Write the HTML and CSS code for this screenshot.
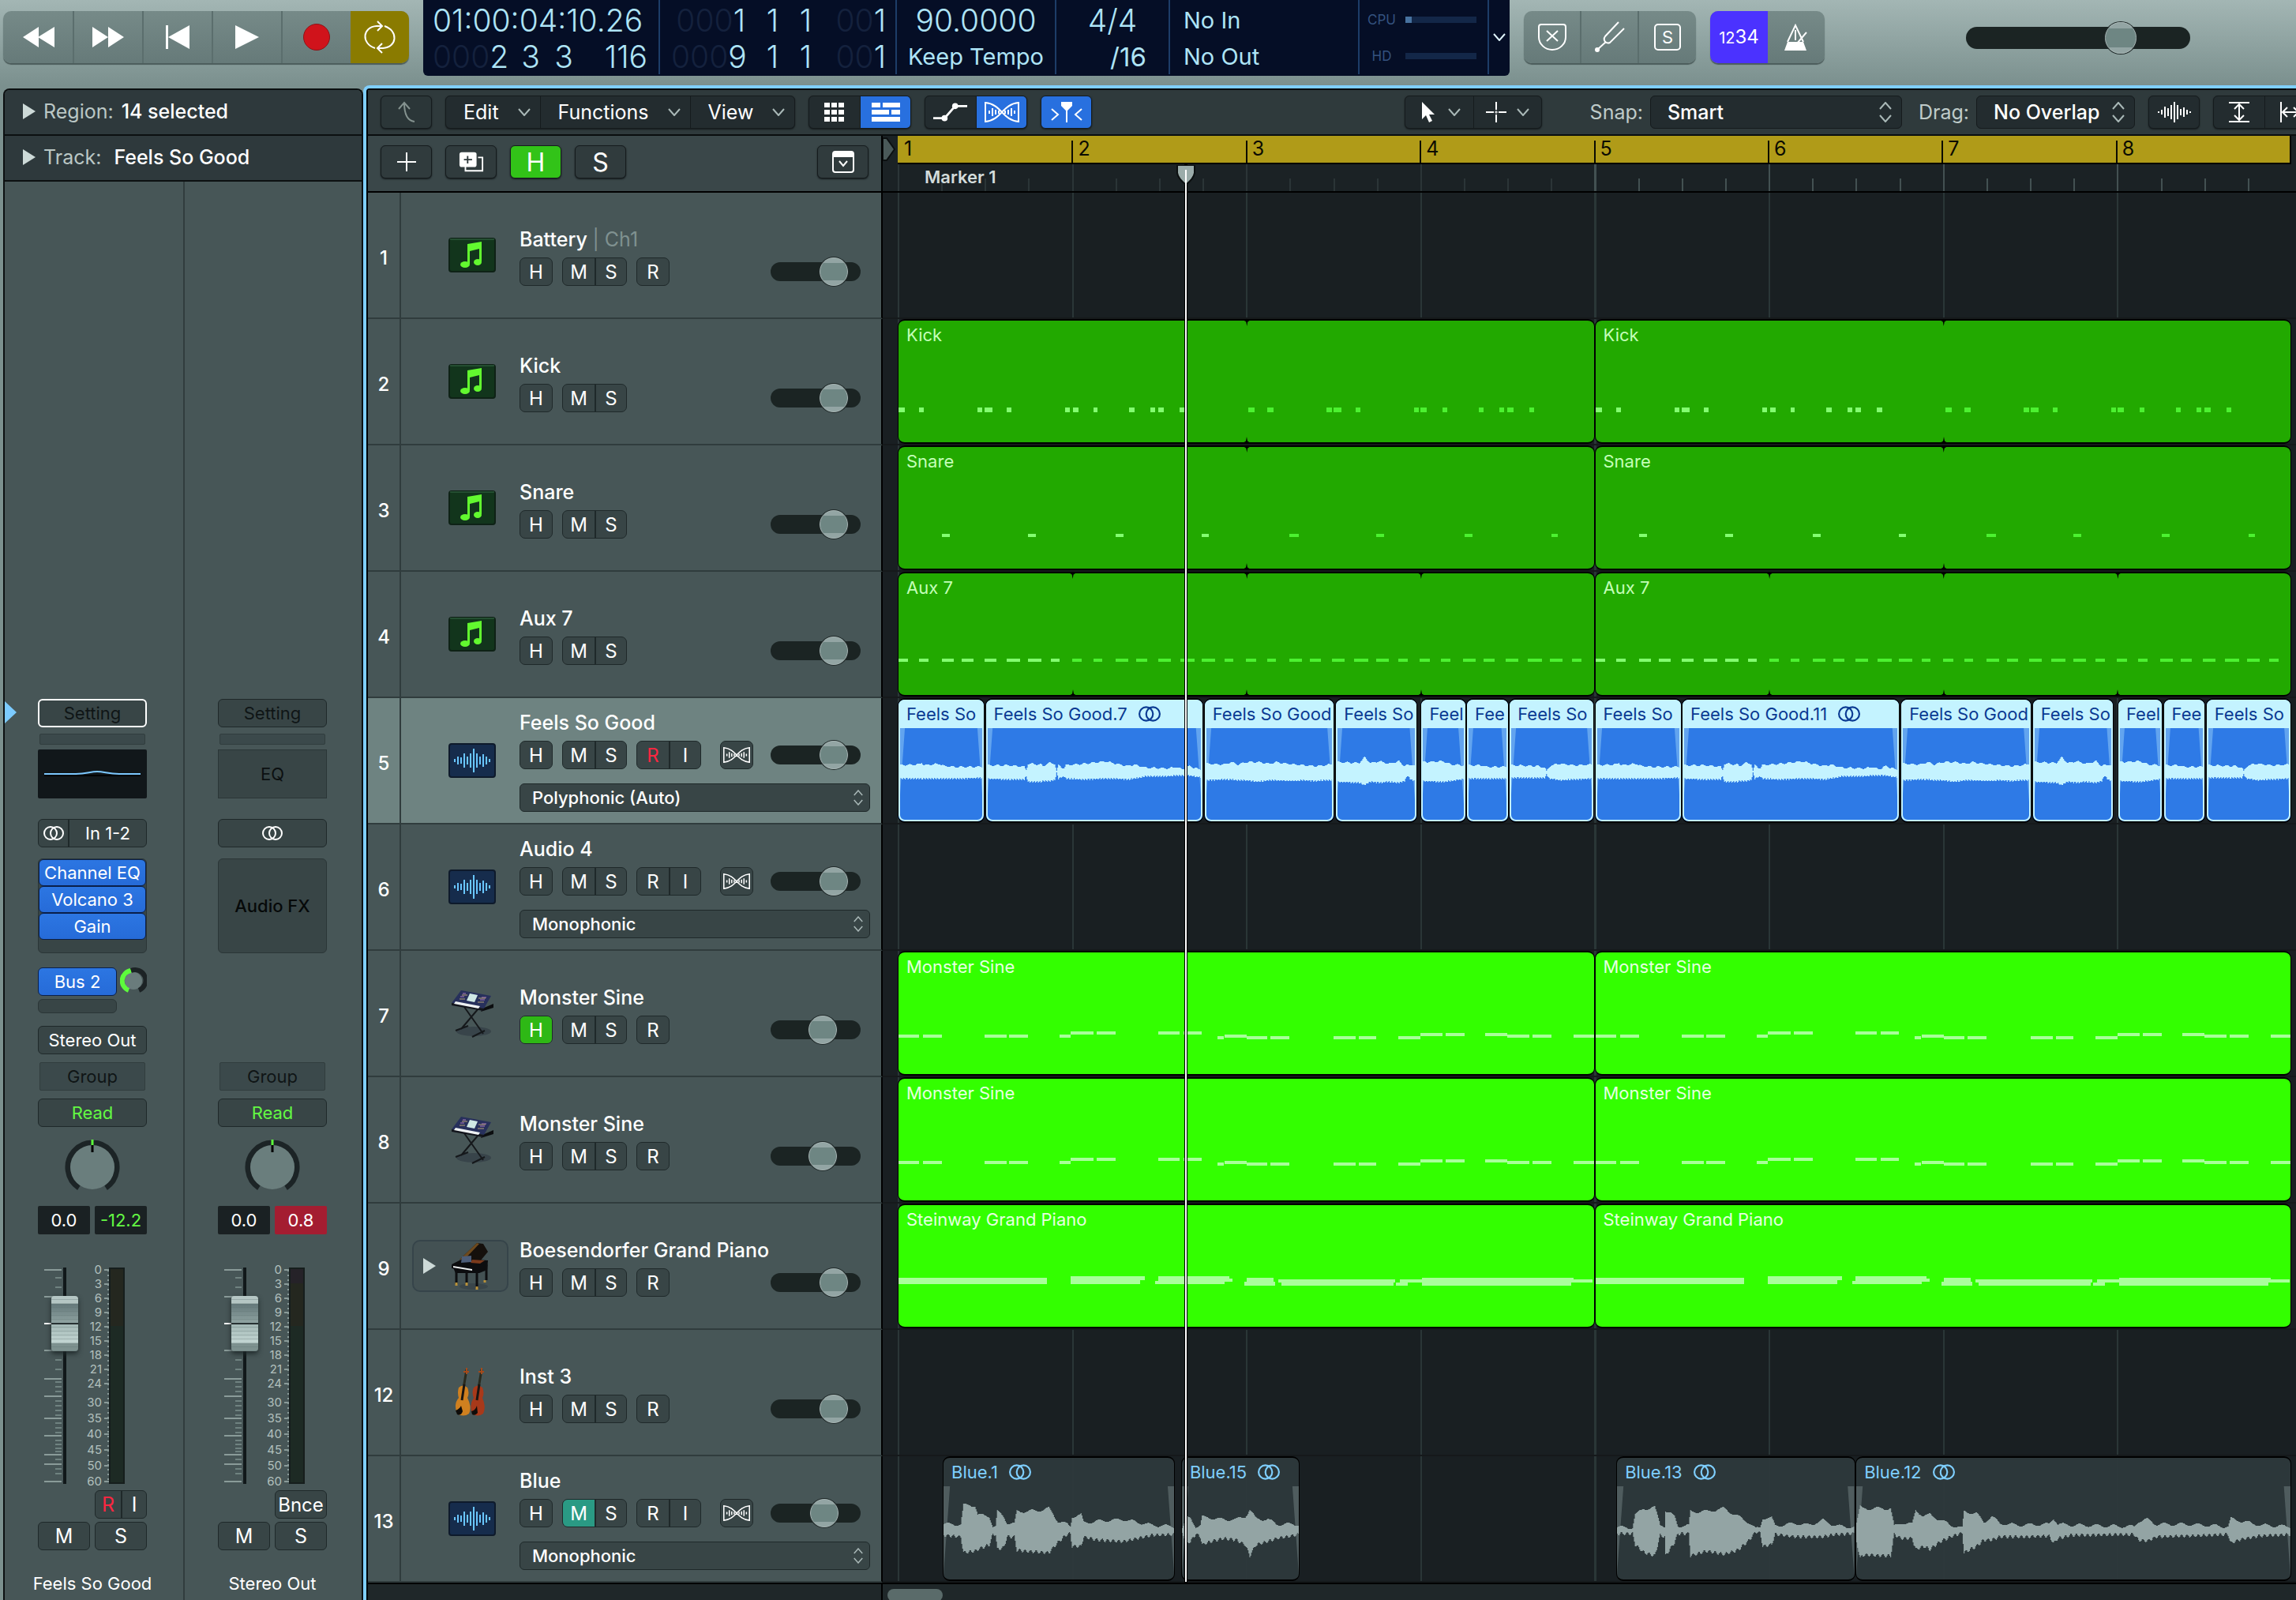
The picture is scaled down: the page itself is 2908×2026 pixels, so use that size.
FILE: index.html
```html
<!DOCTYPE html>
<html lang="en">
<head>
    <meta charset="UTF-8">
    <meta name="viewport" content="width=device-width, initial-scale=1.0">
    <title>Tracks</title>
    <link rel="stylesheet" href="styles.css">
</head>
<body>

    <!-- Icon library -->
    <svg class="icon-defs" aria-hidden="true">
        <symbol id="i-rewind" viewBox="0 0 42 28"><path d="M21 1v26L1 14zM41 1v26L20 14z" fill="currentColor"/></symbol>
        <symbol id="i-forward" viewBox="0 0 42 28"><path d="M1 1v26l20-13zM21 1v26l20-13z" fill="currentColor"/></symbol>
        <symbol id="i-start" viewBox="0 0 32 32"><path d="M1 1h3v30H1zM31 1v30L4 16z" fill="currentColor"/></symbol>
        <symbol id="i-play" viewBox="0 0 32 32"><path d="M1 1v30l30-15z" fill="currentColor"/></symbol>
        <symbol id="i-cycle" viewBox="0 0 44 44"><g fill="none" stroke="currentColor" stroke-width="2"><path d="M16 36C-2 30 0 9 18 8h7M28 8c18 6 16 27-2 28h-7"/><path d="M19 2l6 6-6 6M25 30l-6 6 6 6"/></g></symbol>
        <symbol id="i-shield" viewBox="0 0 36 36"><g fill="none" stroke="currentColor" stroke-width="2"><path d="M4 2h28q3 0 3 3v13c0 9-8 16-17 16S1 27 1 18V5q0-3 3-3z"/><path d="M11 10l14 13M25 10L11 23"/></g></symbol>
        <symbol id="i-fork" viewBox="0 0 40 40"><g fill="none" stroke="currentColor" stroke-width="2"><path d="M31 1L14 19c-3 4 0 10 6 8L38 9"/><path d="M15 26L4 36"/></g><circle cx="4" cy="36" r="3" fill="currentColor"/></symbol>
        <symbol id="i-metro" viewBox="0 0 34 36"><path d="M2 35l4-11h20l4 11z" fill="currentColor"/><path d="M6 24L16 3l10 21M16 9v13M18 26L30 12" fill="none" stroke="currentColor" stroke-width="2"/></symbol>
        <symbol id="i-up" viewBox="0 0 24 28"><path d="M22 26C13 25 9 17 9 2M2 10l7-8 7 8" fill="none" stroke="currentColor" stroke-width="2"/></symbol>
        <symbol id="i-plus" viewBox="0 0 24 24"><path d="M12 0v24M0 12h24" stroke="currentColor" stroke-width="2"/></symbol>
        <symbol id="i-dup" viewBox="0 0 34 28"><path d="M9 20v6h23V8h-6" fill="none" stroke="currentColor" stroke-width="2"/><rect x="1" y="1" width="23" height="20" rx="3" fill="currentColor"/><path d="M12 6v10M7 11h11" stroke="#2f3a3c" stroke-width="2"/></symbol>
        <symbol id="i-drop" viewBox="0 0 28 28"><rect x="1" y="1" width="26" height="26" rx="3" fill="none" stroke="currentColor" stroke-width="2"/><path d="M2 2h24v6H2z" fill="currentColor"/><path d="M9 13l5 6 5-6" fill="none" stroke="currentColor" stroke-width="2"/></symbol>
        <symbol id="i-grid" viewBox="0 0 26 26"><path d="M0 1h7v6H0zM9 1h7v6H9zM18 1h7v6h-7zM0 10h7v6H0zM9 10h7v6H9zM18 10h7v6h-7zM0 19h7v6H0zM9 19h7v6H9zM18 19h7v6h-7z" fill="currentColor"/></symbol>
        <symbol id="i-list" viewBox="0 0 36 26"><path d="M0 1h11v6H0zM14 1h22v6H14zM0 10h22v6H0zM25 10h11v6H25zM0 19h36v6H0z" fill="currentColor"/></symbol>
        <symbol id="i-auto" viewBox="0 0 46 26"><path d="M0 21h15L29 5h16" fill="none" stroke="currentColor" stroke-width="3"/><circle cx="15" cy="21" r="4" fill="currentColor"/><circle cx="29" cy="5" r="4" fill="currentColor"/></symbol>
        <symbol id="i-flex" viewBox="0 0 44 28"><path d="M1 2v24C22 24 22 4 43 2v24C22 24 22 4 1 2z" fill="none" stroke="currentColor" stroke-width="2"/><path d="M6 12v4M10 9v10M14 11v6M18 12v4M38 12v4M34 9v10M30 11v6M26 12v4" stroke="currentColor" stroke-width="2"/></symbol>
        <symbol id="i-catch" viewBox="0 0 40 28"><path d="M13 1h14v5l-6 6v15h-2V12l-6-6z" fill="currentColor"/><path d="M1 10l8 7-8 7M39 10l-8 7 8 7" fill="none" stroke="currentColor" stroke-width="2"/></symbol>
        <symbol id="i-pointer" viewBox="0 0 18 26"><path d="M1 0v22l5-5 4 9 4-2-4-8h7z" fill="currentColor"/></symbol>
        <symbol id="i-cross" viewBox="0 0 28 28"><path d="M14 1v10M14 17v10M1 14h10M17 14h10" stroke="currentColor" stroke-width="2"/><path d="M12 14h4M14 12v4" stroke="currentColor"/></symbol>
        <symbol id="i-chev" viewBox="0 0 16 10"><path d="M1 1l7 8 7-8" fill="none" stroke="currentColor" stroke-width="2"/></symbol>
        <symbol id="i-updown" viewBox="0 0 16 26"><path d="M1 9l7-8 7 8M1 17l7 8 7-8" fill="none" stroke="currentColor" stroke-width="2"/></symbol>
        <symbol id="i-wave" viewBox="0 0 44 28"><path d="M2 13v2M6 11v6M10 7v14M14 9v10M18 5v18M22 1v26M26 5v18M30 10v8M34 8v12M38 11v6M42 13v2" stroke="currentColor" stroke-width="2"/></symbol>
        <symbol id="i-vzoom" viewBox="0 0 28 28"><path d="M1 2h26M1 26h26M14 5v18M8 10l6-6 6 6M8 18l6 6 6-6" fill="none" stroke="currentColor" stroke-width="2"/></symbol>
        <symbol id="i-hzoom" viewBox="0 0 28 28"><path d="M2 1v26M26 1v26M5 14h18M10 8l-6 6 6 6M18 8l6 6-6 6" fill="none" stroke="currentColor" stroke-width="2"/></symbol>
        <symbol id="i-stereo" viewBox="0 0 26 18"><g fill="none" stroke="currentColor" stroke-width="2"><circle cx="9" cy="9" r="8"/><circle cx="17" cy="9" r="8"/></g></symbol>

        <symbol id="i-midi" viewBox="0 0 60 44">
            <rect x="1" y="1" width="58" height="42" rx="3" fill="#12351c" stroke="#0e2216" stroke-width="2"/>
            <path d="M2 2h56" stroke="#39704a"/>
            <path d="M24 8l18-3v25h-3V14l-12 3v16h-3z" fill="#62f92f"/>
            <ellipse cx="21" cy="34" rx="6" ry="4" fill="#62f92f"/><ellipse cx="37" cy="31" rx="5" ry="4" fill="#62f92f"/>
        </symbol>
        <symbol id="i-audio" viewBox="0 0 60 44">
            <rect x="1" y="1" width="58" height="42" rx="3" fill="#162c4c" stroke="#0e1a2b" stroke-width="2"/>
            <path d="M8 20v4M12 17v10M16 18v8M20 13v18M24 17v10M28 13v18M32 7v30M36 13v18M40 17v10M44 14v16M48 17v10M52 20v4" stroke="#69c6ff" stroke-width="2"/>
        </symbol>
        <symbol id="i-synth" viewBox="0 0 60 64">
            <ellipse cx="32" cy="55" rx="22" ry="6" fill="#38444a"/>
            <path d="M20 24l24 34M38 26L16 52M9 54l16-6M30 62l16-8" stroke="#15181b" stroke-width="2" fill="none"/>
            <path d="M57 20l-14 6-2 4 16-5z" fill="#0c0e10"/>
            <path d="M16 3l38 7-9 16L4 19z" fill="#27305c"/>
            <path d="M4 19l41 7-1 3L4 22z" fill="#12141c"/>
            <path d="M9 17l31 6-2 3L7 20z" fill="#eef1f2"/>
            <path d="M27 7l10 2-4 9-10-2z" fill="#cfe8e4"/>
            <path d="M18 7h4M15 11h5M42 12h6M40 15h6" stroke="#b07ac0" stroke-width="1"/>
            <path d="M17 9h7M14 14h7M38 13h9M37 18h8" stroke="#b9a27a" stroke-width="1"/>
        </symbol>
        <symbol id="i-piano" viewBox="0 0 60 64">
            <ellipse cx="34" cy="58" rx="18" ry="4" fill="#39454a"/>
            <path d="M16 24L38 3l8 1 6 10-10 12z" fill="#15100c"/><path d="M16 24L38 3l3 1-19 20z" fill="#6e4a1e"/>
            <path d="M6 30l14-7 32 2-1 12-10 4H11z" fill="#0c0d0f"/><path d="M32 24l16 1-6 4-12-1z" fill="#7a3a1c"/>
            <path d="M6 31l30 4v4L6 35z" fill="#0c0d0f"/><path d="M8 32l24 4v2L8 34z" fill="#e9edee"/><path d="M19 20l12-1v8l-13 1z" fill="#4b5c78"/>
            <path d="M12 38v17M25 40v14M38 38v22M50 30v20" stroke="#0d0e10" stroke-width="3"/>
            <path d="M12 53v4M25 53v4M38 58v4M48 50v3" stroke="#b8913a" stroke-width="3"/>
        </symbol>
        <symbol id="i-violin" viewBox="0 0 60 64">
            <path d="M23 3l-4 24M42 3l-4 24" stroke="#2a2a1d" stroke-width="3"/>
            <path d="M23 1v8M42 1v8M19 6h7M38 6h7" stroke="#a44a1b" stroke-width="2"/>
            <path d="M13 26q5-5 11 0 3 7 0 13 6 12 2 20-7 5-15 0-5-12 2-20-2-7 0-13z" fill="#d0801f"/>
            <path d="M32 26q5-5 11 0 3 7 0 13 5 12 1 20-7 5-14 0-4-12 2-20-3-7 0-13z" fill="#a8391a"/>
            <path d="M20 22l-3 20M39 22l-3 20" stroke="#191512" stroke-width="3"/>
            <path d="M9 55q5-2 7-6l2 7q-2 6-7 4zM29 56q5-1 7-7l1 9q-3 4-7 2z" fill="#0f0c0a"/>
        </symbol>
    </svg>

    <div class="app">

        <!-- Control bar -->
        <header class="control-bar">
            <div class="transport">
                <button type="button" aria-label="Rewind"><svg class="ic ic-42"><use href="#i-rewind"/></svg></button>
                <button type="button" aria-label="Forward"><svg class="ic ic-42"><use href="#i-forward"/></svg></button>
                <button type="button" aria-label="Go to beginning"><svg class="ic ic-32"><use href="#i-start"/></svg></button>
                <button type="button" aria-label="Play"><svg class="ic ic-32"><use href="#i-play"/></svg></button>
                <button type="button" aria-label="Record"><span class="record-dot"></span></button>
                <button type="button" aria-label="Cycle" class="cycle-on"><svg class="ic ic-44"><use href="#i-cycle"/></svg></button>
            </div>

            <div class="lcd">
                <div class="lcd-cell lcd-position">
                    <div class="lcd-row lcd-big">01:00:04:10.26</div>
                    <div class="lcd-row lcd-big lcd-digits"><span><i>000</i>2</span><span>3</span><span>3</span><span>116</span></div>
                </div>
                <div class="lcd-cell lcd-locators">
                    <div class="lcd-row lcd-big lcd-digits"><span><i>000</i>1</span><span>1</span><span>1</span><span><i>00</i>1</span></div>
                    <div class="lcd-row lcd-big lcd-digits"><span><i>000</i>9</span><span>1</span><span>1</span><span><i>00</i>1</span></div>
                </div>
                <div class="lcd-cell lcd-tempo">
                    <div class="lcd-row lcd-big">90.0000</div>
                    <div class="lcd-row">Keep Tempo</div>
                </div>
                <div class="lcd-cell lcd-sign">
                    <div class="lcd-row lcd-big">4/4</div>
                    <div class="lcd-row lcd-division">/16</div>
                </div>
                <div class="lcd-cell lcd-midi">
                    <div class="lcd-row">No In</div>
                    <div class="lcd-row">No Out</div>
                </div>
                <div class="lcd-cell lcd-load">
                    <span>CPU</span><div class="load-bar load-bar-cpu"></div>
                    <span>HD</span><div class="load-bar"></div>
                </div>
                <button type="button" class="lcd-menu" aria-label="Display mode"><svg class="ic ic-chev"><use href="#i-chev"/></svg></button>
            </div>

            <div class="mode-group">
                <button type="button" aria-label="Replace"><svg class="ic ic-36"><use href="#i-shield"/></svg></button>
                <button type="button" aria-label="Tuner"><svg class="ic ic-40"><use href="#i-fork"/></svg></button>
                <button type="button" aria-label="Solo"><span class="solo-box">S</span></button>
            </div>
            <div class="mode-group mode-count">
                <button type="button" class="count-in"><small>12</small>34</button>
                <button type="button" aria-label="Metronome"><svg class="ic ic-36"><use href="#i-metro"/></svg></button>
            </div>
            <input type="range" class="master-volume" aria-label="Master volume" min="0" max="100" value="72">
        </header>

        <div class="main">

            <!-- Inspector -->
            <aside class="inspector">
                <div class="inspector-row"><span class="disclosure"></span><label>Region:</label><span>14 selected</span></div>
                <div class="inspector-row"><span class="disclosure"></span><label>Track:</label><span class="indent">Feels So Good</span></div>

                <div class="strips">
                    <section class="strip strip-current">
                        <button type="button" class="slot dim setting selected">Setting</button>
                        <div class="gain-meter"></div>
                        <div class="eq eq-on"><svg viewBox="0 0 138 62"><path d="M8 33h122" stroke="#000" stroke-width="2"/><path d="M8 31h40c14 0 18-3 27-3s14 3 28 3h27" fill="none" stroke="#7cc8ff" stroke-width="2"/></svg></div>
                        <div class="slot io"><span><svg class="ic ic-stereo"><use href="#i-stereo"/></svg></span><span>In 1-2</span></div>
                        <div class="fx">
                            <button type="button" class="plugin">Channel EQ</button>
                            <button type="button" class="plugin">Volcano 3</button>
                            <button type="button" class="plugin">Gain</button>
                        </div>
                        <div class="send">
                            <button type="button" class="plugin">Bus 2</button>
                            <svg class="send-knob" viewBox="0 0 34 34"><circle cx="17" cy="17" r="11" fill="#6a7c7c"/><path d="M11 29A13 13 0 0 1 14 4" fill="none" stroke="#5dfb3c" stroke-width="6"/><path d="M14 4A13 13 0 0 1 24 29" fill="none" stroke="#1c2325" stroke-width="6"/></svg>
                            <div class="send-empty"></div>
                        </div>
                        <button type="button" class="slot output">Stereo Out</button>
                        <button type="button" class="slot dim group">Group</button>
                        <button type="button" class="slot read">Read</button>
                        <div class="pan"></div>
                        <div class="values"><output>0.0</output><output class="peak">-12.2</output></div>
                        <div class="fader" data-name="Channel volume"></div>
                        <div class="slot ri"><button type="button" class="rec-on">R</button><button type="button">I</button></div>
                        <div class="ms"><button type="button" class="slot">M</button><button type="button" class="slot">S</button></div>
                        <div class="strip-name">Feels So Good</div>
                    </section>

                    <section class="strip">
                        <button type="button" class="slot dim setting">Setting</button>
                        <div class="gain-meter"></div>
                        <div class="eq">EQ</div>
                        <div class="slot io"><span class="wide"><svg class="ic ic-stereo"><use href="#i-stereo"/></svg></span></div>
                        <div class="fx fx-empty">Audio FX</div>
                        <div class="send"></div>
                        <div class="output"></div>
                        <button type="button" class="slot dim group">Group</button>
                        <button type="button" class="slot read">Read</button>
                        <div class="pan"></div>
                        <div class="values"><output>0.0</output><output class="clip">0.8</output></div>
                        <div class="fader fader-out" data-name="Output volume"></div>
                        <div class="bounce"><button type="button" class="slot">Bnce</button></div>
                        <div class="ms"><button type="button" class="slot">M</button><button type="button" class="slot">S</button></div>
                        <div class="strip-name">Stereo Out</div>
                    </section>
                </div>
            </aside>

            <!-- Tracks area -->
            <main class="workspace">
                <div class="toolbar">
                    <button type="button" class="tool faint" aria-label="Up"><svg class="ic ic-28"><use href="#i-up"/></svg></button>
                    <div class="tool-group menus">
                        <button type="button">Edit<svg class="ic ic-chev"><use href="#i-chev"/></svg></button>
                        <button type="button">Functions<svg class="ic ic-chev"><use href="#i-chev"/></svg></button>
                        <button type="button">View<svg class="ic ic-chev"><use href="#i-chev"/></svg></button>
                    </div>
                    <div class="tool-group">
                        <button type="button" aria-label="Live loops"><svg class="ic ic-26"><use href="#i-grid"/></svg></button>
                        <button type="button" class="on" aria-label="Tracks"><svg class="ic ic-36"><use href="#i-list"/></svg></button>
                    </div>
                    <div class="tool-group">
                        <button type="button" aria-label="Automation"><svg class="ic ic-44"><use href="#i-auto"/></svg></button>
                        <button type="button" class="on" aria-label="Flex"><svg class="ic ic-44"><use href="#i-flex"/></svg></button>
                    </div>
                    <button type="button" class="tool on" aria-label="Catch playhead"><svg class="ic ic-40"><use href="#i-catch"/></svg></button>
                    <div class="tool-group pointers">
                        <button type="button" aria-label="Pointer tool"><svg class="ic ic-26"><use href="#i-pointer"/></svg><svg class="ic ic-chev"><use href="#i-chev"/></svg></button>
                        <button type="button" aria-label="Marquee tool"><svg class="ic ic-28"><use href="#i-cross"/></svg><svg class="ic ic-chev"><use href="#i-chev"/></svg></button>
                    </div>
                    <label for="snap">Snap:</label>
                    <div class="select select-snap"><select id="snap"><option>Smart</option></select><svg><use href="#i-updown"/></svg></div>
                    <label for="drag" class="drag-label">Drag:</label>
                    <div class="select select-drag"><select id="drag"><option>No Overlap</option></select><svg><use href="#i-updown"/></svg></div>
                    <button type="button" class="tool" aria-label="Waveform zoom"><svg class="ic ic-44"><use href="#i-wave"/></svg></button>
                    <div class="tool-group">
                        <button type="button" aria-label="Vertical zoom"><svg class="ic ic-28"><use href="#i-vzoom"/></svg></button>
                        <button type="button" aria-label="Horizontal zoom"><svg class="ic ic-28"><use href="#i-hzoom"/></svg></button>
                    </div>
                </div>

                <div class="arrange">
                    <div class="row-grid header-row">
                        <div class="track-tools">
                            <button type="button" class="tool" aria-label="Add track"><svg class="ic ic-24"><use href="#i-plus"/></svg></button>
                            <button type="button" class="tool" aria-label="Duplicate track"><svg class="ic ic-32"><use href="#i-dup"/></svg></button>
                            <button type="button" class="tool hide-on">H</button>
                            <button type="button" class="tool">S</button>
                            <button type="button" class="tool config" aria-label="Track header options"><svg class="ic ic-28"><use href="#i-drop"/></svg></button>
                        </div>
                        <div class="ruler">
                            <svg class="project-start" viewBox="0 0 16 30"><path d="M0 1h5l10 14L5 29H0z" fill="#4a5959" stroke="#0c1011" stroke-width="2"/></svg>
                            <div class="bars" id="bars"></div>
                            <div class="marker-lane" id="markers"><span>Marker 1</span></div>
                        </div>
                    </div>

                    <div id="tracks"></div>

                    <div class="playhead-layer"><div class="playhead"><svg viewBox="0 0 24 26"><path d="M1 0h22v10q-1 7-11 15Q2 17 1 10z" fill="#9bacaa" stroke="#0c1011" stroke-width="2"/><path d="M12 6v20" stroke="#fff" stroke-width="2"/></svg></div></div>
                </div>

                <div class="row-grid scroll-row">
                    <div class="scroll-left"></div>
                    <div class="scroll-track"><div class="scroll-thumb"></div></div>
                </div>
            </main>
        </div>
    </div>

    <script src="script.js"></script>
</body>
</html>
```
FILE: styles.css
```css
* {
    box-sizing: border-box;
}

body {
    margin: 0;
    font-family: Inter, "Liberation Sans", sans-serif;
    font-size: 24px;
    color: #fff;
    background-color: #7b908e;
    overflow: hidden;
}

button, select, input {
    font-family: inherit;
    font-size: inherit;
    color: inherit;
    margin: 0;
    padding: 0;
}

button {
    border: none;
    background: none;
    display: flex;
    align-items: center;
    justify-content: center;
}

.icon-defs {
    display: none;
}

.app {
    height: 100vh;
    display: flex;
    flex-direction: column;
}

/* Icon sizes */
.ic {
    display: block;
    flex: none;
}

.ic-24 { width: 24px; height: 24px; }
.ic-26 { width: 26px; height: 26px; }
.ic-28 { width: 28px; height: 28px; }
.ic-32 { width: 32px; height: 32px; }
.ic-36 { width: 36px; height: 36px; }
.ic-40 { width: 40px; height: 40px; }
.ic-42 { width: 42px; height: 28px; }
.ic-44 { width: 44px; height: 44px; }
.ic-chev { width: 16px; height: 10px; color: #a9b8b7; }
.ic-stereo { width: 28px; height: 20px; }

/* Control bar */
.control-bar {
    flex: none;
    height: 108px;
    padding-left: 4px;
    display: flex;
    align-items: flex-start;
    background: linear-gradient(#a3b6b4, #7b908e);
}

.transport, .mode-group {
    display: flex;
    height: 66px;
    margin-top: 14px;
    border-radius: 10px;
    overflow: hidden;
    background: linear-gradient(#768a88, #667a79);
    box-shadow: 0 2px 1px #4c5c5b;
}

.transport button {
    width: 88px;
    border-left: 2px solid #5b6e6d;
}

.transport button:first-child {
    border-color: transparent;
}

.transport .cycle-on {
    width: 74px;
    border: none;
    background-color: #8a7b00;
}

.record-dot {
    width: 34px;
    height: 34px;
    border-radius: 50%;
    background-color: #d0131b;
    border: 1px solid #8c1418;
}

.lcd {
    display: flex;
    height: 96px;
    margin: 0 18px;
    border-radius: 0 0 6px 6px;
    background-color: #050e26;
    color: #aee4f6;
    font-size: 29px;
}

.lcd-cell {
    height: 94px;
    padding-top: 2px;
    border-right: 2px solid #1d3d68;
}

.lcd-row {
    line-height: 48px;
    height: 46px;
    white-space: nowrap;
}

.lcd-big {
    font-size: 39px;
    font-weight: 300;
}

.lcd-digits {
    display: grid;
    grid-template-columns: 94px 42px 42px 94px;
    text-align: right;
}

.lcd-digits i {
    font-style: normal;
    color: #14213d;
}

.lcd-position { width: 300px; padding-left: 12px; }
.lcd-locators { width: 300px; padding-left: 14px; }
.lcd-tempo { width: 202px; text-align: center; }
.lcd-sign { width: 144px; text-align: center; }
.lcd-midi { width: 240px; padding-left: 17px; }
.lcd-division { font-size: 33px; padding-left: 40px; }

.lcd-load {
    width: 164px;
    padding-left: 8px;
    display: grid;
    grid-template-columns: 40px 90px;
    grid-auto-rows: 46px;
    gap: 0 10px;
    align-items: center;
    justify-items: center;
    font-size: 17px;
    color: #34527f;
}

.load-bar {
    width: 90px;
    height: 8px;
    background-color: #132748;
}

.load-bar-cpu {
    border-left: 8px solid #47729f;
}

.lcd-menu {
    width: 26px;
    height: 94px;
}

.lcd-menu .ic {
    color: #dff4fb;
}

.mode-group button {
    width: 73px;
    border-right: 2px solid #5b6e6d;
}

.mode-group button:last-child {
    width: 72px;
    border: none;
}

.mode-count {
    margin-left: 18px;
}

.mode-count .count-in {
    border: none;
    background-color: #4b32ff;
    align-items: baseline;
    line-height: 66px;
}

.count-in small {
    font-size: 20px;
}

.solo-box {
    width: 34px;
    height: 34px;
    line-height: 30px;
    border: 2px solid #fff;
    border-radius: 5px;
    font-size: 22px;
}

/* Sliders */
input[type="range"] {
    -webkit-appearance: none;
    appearance: none;
    background-color: #1b2423;
    outline: none;
}

input[type="range"]::-webkit-slider-thumb {
    -webkit-appearance: none;
    width: 36px;
    height: 36px;
    border-radius: 50%;
    border: 1px solid #a7b5b4;
    background: linear-gradient(#93a5a4 18%, #6e8683 18% 82%, #93a5a4 82%);
    box-shadow: 0 0 0 1px #202a2a;
}

.master-volume {
    width: 284px;
    height: 28px;
    margin: 34px 134px 0 auto;
    border-radius: 14px;
}

.master-volume::-webkit-slider-thumb {
    zoom: 1.1;
}

/* Main layout */
.main {
    flex: 1;
    min-height: 0;
    display: grid;
    grid-template-columns: 456px minmax(0, 1fr);
    padding-left: 4px;
}

/* Inspector */
.inspector {
    margin-top: 4px;
    border: 2px solid #0c1011;
    border-bottom: none;
    border-radius: 8px 8px 0 0;
    background-color: #475657;
    display: flex;
    flex-direction: column;
    overflow: hidden;
}

.inspector-row {
    flex: none;
    height: 58px;
    padding: 0 0 3px 23px;
    display: flex;
    align-items: center;
    gap: 10px;
    background-color: #2e393c;
    border-bottom: 2px solid #0c1011;
    color: #fff;
    font-size: 25px;
    font-weight: 500;
}

.inspector-row label {
    color: #bac7c5;
    font-weight: 400;
}

.inspector-row .indent {
    padding-left: 6px;
}

.disclosure {
    width: 0;
    height: 0;
    border-left: 16px solid #cddad8;
    border-top: 10px solid transparent;
    border-bottom: 10px solid transparent;
}

.strips {
    flex: 1;
    display: grid;
    grid-template-columns: 228px 1fr;
}

.strip {
    position: relative;
    display: flex;
    flex-direction: column;
    justify-content: flex-end;
    padding: 0 44px 7px 42px;
    font-size: 22px;
}

.strip-current {
    padding-right: 46px;
    border-right: 2px solid #313d3e;
}

/* Arrow next to the selected channel */
.strip-current::before {
    content: "";
    position: absolute;
    left: 0;
    top: 658px;
    border-left: 15px solid #7ccbff;
    border-top: 14px solid transparent;
    border-bottom: 14px solid transparent;
}

.slot, .plugin {
    width: 100%;
    height: 36px;
    flex: none;
    border: 1px solid #1f292a;
    border-radius: 6px;
    background-color: #384546;
    white-space: nowrap;
}

.dim {
    color: #0f1516;
}

.setting.selected {
    border: 2px solid #fff;
}

.gain-meter {
    flex: none;
    height: 14px;
    margin: 8px 2px 6px;
    border: 1px solid #313d3e;
    border-radius: 2px;
    background-color: #3b494b;
}

.eq {
    flex: none;
    height: 62px;
    line-height: 60px;
    text-align: center;
    border: 1px solid #2b3637;
    background-color: #384546;
    color: #0c1011;
}

.eq-on {
    border: none;
    border-radius: 2px;
    background-color: #11171a;
}

.eq-on svg {
    display: block;
    width: 100%;
}

.io {
    margin: 26px 0 14px;
    display: grid;
    grid-template-columns: 37px 1fr;
}

.io span {
    display: flex;
    align-items: center;
    justify-content: center;
}

.io span + span {
    border-left: 2px solid #1f292a;
}

.io .wide {
    grid-column: 1 / 3;
}

.io .ic-stereo {
    width: 26px;
    height: 18px;
}

.fx {
    flex: none;
    height: 120px;
    border: 1px solid #2b3637;
    border-radius: 6px;
    background-color: #384546;
}

.fx .plugin {
    height: 34px;
}

.plugin {
    background: linear-gradient(#2c76e2, #266bd8);
    border-color: #0a1f4a;
}

.fx-empty {
    line-height: 118px;
    text-align: center;
    color: #060909;
    font-weight: 500;
}

.send {
    flex: none;
    height: 58px;
    margin: 18px 0 16px;
    display: grid;
    grid-template-columns: 100px 34px;
    grid-template-rows: 36px 18px;
    gap: 4px;
}

.send-knob {
    width: 34px;
    height: 34px;
}

.send-empty {
    border: 1px solid #2b3637;
    border-radius: 6px;
    background-color: #384546;
}

.output {
    flex: none;
    height: 36px;
}

.group {
    width: auto;
    margin: 10px 2px;
    border-color: #313d3e;
    border-radius: 2px;
    background-color: #3b494b;
}

.read {
    color: #63f943;
}

.pan {
    flex: none;
    height: 70px;
    margin: 16px 0 14px;
}

.pan svg {
    display: block;
    width: 70px;
    height: 70px;
    margin: 0 auto;
}

.values, .ms {
    flex: none;
    display: grid;
    grid-template-columns: 1fr 1fr;
    gap: 6px;
}

.values output {
    height: 36px;
    line-height: 36px;
    text-align: center;
    border-radius: 2px;
    background-color: #1a2123;
}

.values .peak {
    color: #63f943;
}

.values .clip {
    background-color: #a41d31;
}

/* Scale drawing and fader share one cell */
.fader {
    flex: none;
    display: grid;
    margin: 42px 0 6px;
}

.fader svg, .fader input {
    grid-area: 1 / 1;
}

.fader svg {
    width: 138px;
    height: 276px;
    overflow: visible;
    font-size: 15px;
}

.fader input[type="range"] {
    writing-mode: vertical-lr;
    direction: rtl;
    width: 34px;
    height: 276px;
    margin-left: 17px;
    background: none;
}

.fader input[type="range"]::-webkit-slider-thumb {
    width: 34px;
    height: 70px;
    border: none;
    border-radius: 4px;
    background: repeating-linear-gradient(transparent 0 4px, #5f747355 4px 5px),
        linear-gradient(#b5c6c4 14%, #64787a 15%, #8fa3a1 48%, #1c2425 48% 51%, #a3b8b5 51%, #c3d6d3 85%, #7d918f 86%);
    box-shadow: 0 3px 6px #1f292a;
}

.ri, .bounce {
    width: 66px;
    margin-left: auto;
}

.ri {
    display: grid;
    grid-template-columns: 1fr 1fr;
    font-size: 25px;
}

.ri button + button {
    border-left: 2px solid #1f292a;
}

.rec-on {
    color: #fb2741;
}

.ms {
    margin: 4px 0 28px;
    font-size: 25px;
}

.bounce {
    font-size: 24px;
}

.strip-name {
    display: flex;
    justify-content: center;
    line-height: 28px;
    white-space: nowrap;
}

/* Workspace */
.workspace {
    border-left: 4px solid #7fcfff;
    border-top: 4px solid #7fcfff;
    border-radius: 8px 0 0 0;
    background-color: #000;
    padding: 2px 0 0 2px;
    display: flex;
    flex-direction: column;
    overflow: hidden;
}

.toolbar {
    flex: none;
    height: 58px;
    padding-left: 16px;
    display: flex;
    align-items: center;
    gap: 17px;
    background-color: #2f3a3c;
    border-bottom: 2px solid #0a0e0f;
    font-size: 25px;
    font-weight: 500;
}

.toolbar > * {
    flex: none;
}

.toolbar label {
    color: #bfcbc9;
    font-weight: 400;
}

.tool, .tool-group {
    height: 42px;
    border: 1px solid #151b1d;
    border-radius: 6px;
    background-color: #232c2f;
    box-shadow: 0 1px 2px #151b1d;
}

.tool {
    width: 65px;
}

.tool.faint {
    background-color: #2b3638;
    color: #84928f;
}

.tool-group {
    display: flex;
    overflow: hidden;
}

.tool-group button {
    width: 64px;
}

.tool-group button + button {
    border-left: 1px solid #151b1d;
}

.tool.on, .tool-group .on {
    background-color: #2870df;
}

.tool-group.menus button {
    width: auto;
    gap: 24px;
    padding: 0 12px 0 22px;
}

.pointers {
    margin-left: auto;
}

.tool-group.pointers button {
    width: 86px;
    gap: 12px;
}

.toolbar label[for="snap"] {
    margin: 0 -8px 0 44px;
}

.toolbar .drag-label {
    margin: 0 -8px 0 4px;
}

.toolbar .tool-group:last-child {
    margin-right: -25px;
}

/* Pop-up menus with the arrows laid over the select */
.select {
    display: grid;
    align-items: center;
    border: 1px solid #151b1d;
    border-radius: 6px;
    background-color: #232c2f;
    height: 42px;
}

.select select, .select svg {
    grid-area: 1 / 1;
}

.select select {
    appearance: none;
    height: 100%;
    width: 100%;
    border: none;
    background: none;
    padding-left: 21px;
    font-weight: 500;
}

.select svg {
    justify-self: end;
    width: 16px;
    height: 26px;
    margin-right: 12px;
    color: #a9b8b7;
    pointer-events: none;
}

.select-snap {
    width: 319px;
}

.select-drag {
    width: 201px;
}

/* Track list and timeline */
.arrange {
    position: relative;
    flex: none;
}

.row-grid {
    display: grid;
    grid-template-columns: 652px minmax(0, 1fr);
}

.header-row {
    height: 72px;
    border-bottom: 2px solid #000;
}

.track-tools {
    display: flex;
    gap: 17px;
    padding: 12px 16px;
    background-color: #3a4749;
    border-right: 2px solid #000;
}

.track-tools .tool {
    background-color: #303b3d;
    font-size: 32px;
}

.track-tools .hide-on {
    background-color: #32c318;
}

.track-tools .config {
    margin-left: auto;
}

.ruler {
    position: relative;
    padding: 0 6px 0 19px;
    background-color: #1b2225;
}

.project-start {
    position: absolute;
    left: 0;
    top: 2px;
    width: 16px;
    height: 30px;
}

.bars {
    display: grid;
    grid-template-columns: repeat(8, 1fr);
    height: 36px;
    padding-top: 6px;
    background-color: #b09b18;
    border-bottom: 2px solid #000;
    border-right: 2px solid #000;
    color: #0b0b02;
    font-size: 25px;
    line-height: 20px;
}

.bars span {
    padding-left: 6px;
    border-left: 2px solid #0b0b02;
}

.bars span:first-child {
    border-color: transparent;
}

.marker-lane {
    height: 34px;
    padding-left: 34px;
    font-size: 22px;
    font-weight: 600;
    line-height: 32px;
    color: #d3dcdb;
    background:
        linear-gradient(to right, #1b222599 50%, transparent 50%),
        repeating-linear-gradient(to right, #435152 0 2px, transparent 2px 12.5%),
        repeating-linear-gradient(to right, #435152 0 2px, transparent 2px 3.125%) 0 18px no-repeat;
}

/* Track row */
.track {
    min-height: 160px;
}

.track-head {
    display: grid;
    grid-template-columns: 42px 150px 1fr;
    background-color: #475657;
    border-right: 2px solid #000;
    border-bottom: 2px solid #303c3d;
}

.track-head.current {
    background-color: #6e8381;
}

.track-number {
    display: flex;
    align-items: center;
    justify-content: center;
    padding-top: 6px;
    border-right: 2px solid #303c3d;
    font-weight: 500;
}

.track-icon {
    display: flex;
    align-items: center;
    justify-content: flex-end;
    padding-right: 30px;
}

.track-icon svg {
    width: 60px;
    height: 64px;
}

.track-icon .stack-box {
    display: flex;
    align-items: center;
    gap: 14px;
    width: 122px;
    height: 66px;
    margin-right: -16px;
    padding-left: 12px;
    border: 2px solid #36444a;
    border-radius: 10px;
    background-color: #435153;
}

.track-body {
    display: flex;
    flex-direction: column;
    justify-content: flex-start;
    padding: 46px 14px 0 0;
}

.track-body.audio {
    padding-top: 18px;
}

.track-name {
    height: 36px;
    line-height: 26px;
    font-size: 25px;
    font-weight: 500;
    white-space: nowrap;
}

.track-name small {
    font-size: 25px;
    font-weight: 400;
    color: #7f9190;
}

.track-controls {
    display: flex;
    align-items: center;
    height: 36px;
    gap: 12px;
}

.btn-group {
    display: flex;
    height: 36px;
    border: 1px solid #1f292a;
    border-radius: 7px;
    overflow: hidden;
    background-color: #384546;
}

.btn-group button {
    width: 40px;
}

.btn-group button + button {
    border-left: 2px solid #1f292a;
}

.btn-group .hide {
    background-color: #2eb815;
}

.btn-group .mute {
    background-color: #2a9a84;
}

.btn-group.flex {
    margin-left: 12px;
}

.btn-group .ic {
    width: 34px;
    height: 24px;
}

.track-controls input {
    width: 114px;
    height: 24px;
    margin: 0 12px 0 auto;
    border-radius: 12px;
}

.track-body .select {
    height: 36px;
    margin-top: 18px;
    border-color: #1f292a;
    background-color: #384546;
    font-size: 22px;
}

.track-body .select select {
    padding-left: 15px;
}

.track-body .select svg {
    width: 12px;
    height: 20px;
    margin-right: 8px;
}

/* Lanes and regions */
.lane {
    padding: 0 6px 0 19px;
    background-color: #191f22;
    border-bottom: 2px solid #15191b;
}

.lane-grid {
    position: relative;
    height: 100%;
    background: repeating-linear-gradient(to right, #2a3637 0 2px, transparent 2px 12.5%);
}

.region {
    position: absolute;
    top: 0;
    height: 158px;
    border: 1px solid #000;
    border-width: 2px 1px;
    border-radius: 9px;
    overflow: hidden;
    color: #c4ffb8;
    font-size: 22px;
    background-color: #22a900;
}

.region-title {
    display: flex;
    align-items: center;
    gap: 14px;
    height: 36px;
    padding-left: 10px;
    white-space: nowrap;
}

.region > svg {
    position: absolute;
    left: 0;
    top: 0;
    width: 100%;
    height: 154px;
}

.region.bright {
    background-color: #33ff00;
    color: #e6ffe0;
}

.region.blue {
    background-color: #2e7ae6;
    color: #0a3a92;
}

.region.blue::after {
    content: "";
    position: absolute;
    inset: 0;
    border: 2px solid #c4f3ff;
    border-radius: 8px;
}

.region.blue .region-title {
    background-color: #c4f3ff;
}

.region.muted {
    background-color: #2e393cee;
    color: #7fcfff;
}

.notch {
    position: absolute;
    width: 10px;
    height: 8px;
    margin-left: -4px;
    background-color: #000;
    clip-path: polygon(0 0, 100% 0, 60% 30%, 50% 100%, 40% 30%);
}

.notch.top {
    top: 1px;
}

.notch.bottom {
    top: 149px;
    transform: rotate(180deg);
}

/* Playhead */
.playhead-layer {
    position: absolute;
    top: 36px;
    bottom: 0;
    left: 671px;
    right: 6px;
    pointer-events: none;
}

.playhead {
    position: absolute;
    left: 20.55%;
    height: 100%;
    width: 4px;
    border: 1px solid #000;
    background-color: #fff;
}

.playhead svg {
    position: absolute;
    left: -11px;
    top: 0;
    width: 24px;
    height: 26px;
}

/* Scroll bar */
.scroll-row {
    flex: 1;
    border-top: 2px solid #000;
}

.scroll-left, .scroll-track {
    background-color: #1f2729;
}

.scroll-left {
    border-right: 2px solid #000;
}

.scroll-track {
    padding: 6px;
}

.scroll-thumb {
    width: 70px;
    height: 16px;
    border-radius: 8px;
    background-color: #5a6b6a;
}
```
FILE: script.js
```js
// Positions on the timeline are in ticks
var BAR = 375;
var LENGTH = BAR * 8;

// Notes: [start, y, width, height]
function notes(list, y, h) {
    return list.map(function (n) { return [n[0], y, n[1], h]; });
}

var kickNotes = notes([[0, 14], [45, 10], [171, 10], [185, 17], [233, 10], [359, 10], [376, 13], [420, 10], [498, 11], [543, 10], [560, 13], [607, 12],
    [754, 14], [795, 14], [924, 11], [938, 17], [986, 10], [1112, 10], [1126, 13], [1173, 11], [1252, 10], [1296, 10], [1313, 14], [1361, 10]], 110, 6);
var snareNotes = notes([[93, 17], [280, 17], [468, 17], [655, 14], [843, 20], [1030, 17], [1221, 17], [1409, 13]], 110, 4);
var auxNotes = [];
for (var b = 0; b < 4; b++) {
    [[0, 21], [45, 20], [93, 27], [137, 24], [185, 27], [233, 30], [280, 28], [328, 20]].forEach(function (n) {
        auxNotes.push([n[0] + b * BAR, 108, n[1], 4]);
    });
}
var sineNotes = [].concat(
    notes([[0, 45], [52, 41], [185, 48], [239, 41], [348, 24], [703, 48], [1313, 48], [1368, 41], [1456, 46]], 104, 4),
    notes([[372, 48], [427, 41], [560, 47], [615, 40]], 100, 4),
    notes([[689, 13], [751, 44], [802, 41], [938, 48], [993, 37], [1078, 48]], 106, 4),
    notes([[1126, 47], [1180, 41], [1265, 48]], 102, 4));
var pianoNotes = [[0, 92, 321, 8], [372, 90, 160, 5], [372, 94, 150, 6], [560, 90, 153, 5], [560, 93, 160, 4], [553, 96, 150, 4],
    [751, 92, 58, 6], [747, 97, 66, 5], [819, 94, 252, 4], [826, 97, 242, 5], [1081, 94, 50, 4], [1074, 98, 24, 4],
    [1129, 92, 327, 6], [1129, 97, 323, 5], [1456, 94, 42, 4]];

// Waveforms: [x, above, below]
var feels = [
    [[0, 9, 8], [45, 10, 8], [50, 13, 8], [55, 9, 8], [88, 11, 8], [100, 8, 8], [120, 7, 8], [187, 7, 7]],
    [[0, 9, 8], [50, 9, 9], [82, 7, 9], [86, 3, 5], [90, 11, 12], [118, 10, 12], [122, 8, 11], [135, 12, 11], [148, 11, 10], [152, 2, 1], [156, 9, 8], [168, 5, 5], [172, 9, 8], [215, 11, 9], [258, 14, 8], [280, 11, 8], [305, 8, 9], [320, 10, 8], [345, 6, 5], [395, 5, 5], [410, 7, 4], [425, 4, 4], [440, 8, 4], [460, 4, 6], [469, 4, 7]],
    [[0, 11, 10], [45, 10, 9], [55, 13, 9], [70, 10, 10], [90, 13, 10], [115, 13, 12], [140, 11, 10], [155, 13, 10], [190, 10, 11], [215, 9, 10], [240, 8, 11], [260, 9, 10], [281, 11, 10]],
    [[0, 13, 12], [50, 12, 13], [62, 19, 16], [75, 12, 12], [95, 14, 13], [115, 11, 12], [138, 14, 13], [150, 8, 11], [156, 9, 4], [165, 10, 10], [176, 8, 11]],
    [[0, 13, 11], [50, 14, 12], [65, 10, 11], [97, 9, 8]],
    [[0, 9, 8], [30, 9, 8], [45, 7, 8], [91, 7, 8]],
    [[0, 9, 7], [60, 8, 7], [77, 6, 7], [80, 1, 2], [84, 5, 7], [90, 9, 8], [110, 11, 10], [140, 9, 9], [184, 10, 8]]
];
var blue1 = [[0, 8, 6], [19, 8, 8], [22, 32, 28], [35, 32, 26], [38, 20, 24], [51, 18, 18], [55, 5, 5], [58, 5, 5], [60, 24, 24], [67, 18, 22], [71, 10, 8], [79, 8, 8], [82, 24, 25], [103, 25, 27], [118, 28, 28], [128, 12, 15], [138, 8, 5], [142, 5, 4], [144, 18, 20], [154, 20, 20], [157, 10, 8], [173, 12, 12], [201, 14, 14], [233, 7, 6], [259, 5, 5]];
var blue15 = [[0, 3, 3], [5, 16, 16], [9, 16, 14], [15, 5, 4], [20, 6, 8], [22, 17, 18], [32, 16, 14], [45, 14, 10], [60, 14, 12], [70, 18, 18], [75, 26, 32], [82, 15, 18], [95, 14, 14], [105, 8, 10], [130, 8, 5]];
var blue13 = [[0, 4, 4], [17, 4, 4], [20, 20, 18], [30, 28, 28], [42, 29, 32], [48, 8, 6], [53, 6, 8], [54, 25, 32], [64, 18, 15], [68, 6, 4], [80, 6, 4], [82, 24, 32], [100, 24, 26], [120, 28, 30], [135, 18, 25], [148, 10, 12], [155, 2, 2], [160, 4, 3], [163, 16, 20], [173, 16, 18], [177, 6, 5], [200, 9, 8], [215, 7, 8], [230, 13, 8], [245, 6, 5], [266, 4, 4]];
var blue12 = [[0, 10, 15], [4, 30, 36], [6, 28, 31], [38, 28, 32], [42, 5, 5], [50, 10, 10], [62, 8, 10], [66, 26, 24], [75, 18, 20], [82, 20, 24], [92, 14, 15], [105, 7, 8], [118, 3, 3], [120, 24, 28], [134, 22, 20], [142, 10, 12], [151, 18, 12], [160, 9, 8], [180, 7, 8], [215, 8, 7], [220, 16, 16], [225, 8, 10], [240, 7, 6], [310, 5, 5], [315, 12, 12], [325, 14, 13], [335, 8, 8], [370, 8, 7], [415, 5, 5], [418, 15, 16], [430, 12, 11], [450, 7, 7], [485, 5, 5]];

function midiPair(name, list, loops, kind) {
    return [0, 4].map(function (bar) {
        return { name: name, start: bar * BAR, end: (bar + 4) * BAR, notes: list, loops: loops, kind: kind };
    });
}

var feelsEdges = [[0, 187], [188, 657], [659, 940], [942, 1118], [1126, 1223], [1224, 1315], [1316, 1500]];
var feelsNames = ['Feels So', 'Feels So Good.7', 'Feels So Good', 'Feels So', 'Feel', 'Fee', 'Feels So'];
var feelsRegions = [];
[0, 1500].forEach(function (offset) {
    feelsEdges.forEach(function (e, i) {
        var name = offset && i === 1 ? 'Feels So Good.11' : feelsNames[i];
        feelsRegions.push({ name: name, start: e[0] + offset, end: e[1] + offset, wave: feels[i], kind: 'blue', stereo: i === 1 });
    });
});

var tracks = [
    { no: 1, name: 'Battery', channel: 'Ch1', icon: 'midi', buttons: 'R', pan: 79, regions: [] },
    { no: 2, name: 'Kick', icon: 'midi', pan: 79, regions: midiPair('Kick', kickNotes, [2], '') },
    { no: 3, name: 'Snare', icon: 'midi', pan: 79, regions: midiPair('Snare', snareNotes, [2], '') },
    { no: 4, name: 'Aux 7', icon: 'midi', pan: 79, regions: midiPair('Aux 7', auxNotes, [1, 2, 3], '') },
    { no: 5, name: 'Feels So Good', icon: 'audio', buttons: 'RI', flex: 'Polyphonic (Auto)', current: true, pan: 79, regions: feelsRegions },
    { no: 6, name: 'Audio 4', icon: 'audio', buttons: 'RI', flex: 'Monophonic', pan: 79, regions: [] },
    { no: 7, name: 'Monster Sine', icon: 'synth', buttons: 'R', hide: true, pan: 61, regions: midiPair('Monster Sine', sineNotes, [], 'bright') },
    { no: 8, name: 'Monster Sine', icon: 'synth', buttons: 'R', pan: 61, regions: midiPair('Monster Sine', sineNotes, [], 'bright') },
    { no: 9, name: 'Boesendorfer Grand Piano', icon: 'piano', stack: true, buttons: 'R', pan: 79, regions: midiPair('Steinway Grand Piano', pianoNotes, [], 'bright') },
    { no: 12, name: 'Inst 3', icon: 'violin', buttons: 'R', pan: 79, regions: [] },
    { no: 13, name: 'Blue', icon: 'audio', buttons: 'RI', flex: 'Monophonic', mute: true, pan: 64, regions: [
        { name: 'Blue.1', start: 97, end: 597, wave: blue1, kind: 'muted', stereo: true },
        { name: 'Blue.15', start: 610, end: 865, wave: blue15, kind: 'muted', stereo: true },
        { name: 'Blue.13', start: 1547, end: 2061, wave: blue13, kind: 'muted', stereo: true },
        { name: 'Blue.12', start: 2062, end: 3000, wave: blue12, kind: 'muted', stereo: true }
    ] }
];

function percent(ticks) {
    return (ticks / LENGTH * 100) + '%';
}

// Draw the notes of a MIDI region
function noteSvg(region) {
    var loopStart = region.loops.length ? region.loops[0] * BAR : Infinity;
    var rects = region.notes.map(function (n) {
        var color = region.kind === 'bright' ? '#a9ff9b' : (n[0] < loopStart ? '#83ff70' : '#4cf230');
        return '<rect x="' + n[0] + '" y="' + n[1] + '" width="' + n[2] + '" height="' + n[3] + '" fill="' + color + '"/>';
    }).join('');
    return '<svg viewBox="0 0 1500 154" preserveAspectRatio="none" shape-rendering="crispEdges">' + rects + '</svg>';
}

// Draw a stepped waveform with its fades
function waveSvg(region) {
    var pts = region.wave;
    var width = pts[pts.length - 1][0];
    var muted = region.kind === 'muted';
    var step = muted ? 1 : 2;
    var mid = 92;
    var top = '';
    var bottom = '';
    var k = 0;
    for (var x = 0; x < width; x += step) {
        while (k < pts.length - 2 && x >= pts[k + 1][0]) k++;
        var a = pts[k], c = pts[k + 1];
        var t = (x - a[0]) / (c[0] - a[0]);
        var jitter = muted ? 2 : 1;
        var up = Math.round(a[1] + (c[1] - a[1]) * t + Math.sin(x * 12.9) * jitter);
        var down = Math.round(a[2] + (c[2] - a[2]) * t + Math.sin(x * 7.3) * jitter);
        top += 'L' + x + ' ' + (mid - up) + 'L' + (x + step) + ' ' + (mid - up);
        bottom = 'L' + (x + step) + ' ' + (mid + down) + 'L' + x + ' ' + (mid + down) + bottom;
    }
    var color = muted ? '#93a4a4' : '#c4f3ff';
    var f = width * 14 / (region.end - region.start);
    var fades = '<path d="M0 36h' + f + 'L0 148zM' + width + ' 36h-' + f + 'L' + width + ' 148z" fill="' + color + '" opacity="0.35"/>';
    return '<svg viewBox="0 0 ' + width + ' 154" preserveAspectRatio="none">' + fades + '<path d="M0 ' + mid + top + bottom + 'z" fill="' + color + '"/></svg>';
}

function regionHtml(r) {
    var html = '<div class="region ' + r.kind + '" style="left:' + percent(r.start) + ';width:' + percent(r.end - r.start) + '">';
    html += '<div class="region-title"><span>' + r.name + '</span>' + (r.stereo ? '<svg class="ic ic-stereo"><use href="#i-stereo"/></svg>' : '') + '</div>';
    html += (r.notes ? noteSvg(r) : waveSvg(r)) + '</div>';
    (r.loops || []).forEach(function (bar) {
        var left = percent(r.start + bar * BAR);
        html += '<div class="notch top" style="left:' + left + '"></div><div class="notch bottom" style="left:' + left + '"></div>';
    });
    return html;
}

function trackHtml(t) {
    var icon = '<svg><use href="#i-' + t.icon + '"/></svg>';
    if (t.stack) {
        icon = '<div class="stack-box"><span class="disclosure"></span>' + icon + '</div>';
    }
    var controls = '<div class="btn-group"><button type="button"' + (t.hide ? ' class="hide"' : '') + '>H</button></div>';
    controls += '<div class="btn-group"><button type="button"' + (t.mute ? ' class="mute"' : '') + '>M</button><button type="button">S</button></div>';
    if (t.buttons) {
        controls += '<div class="btn-group">' + t.buttons.split('').map(function (c) {
            return '<button type="button"' + (t.current && c === 'R' ? ' class="rec-on"' : '') + '>' + c + '</button>';
        }).join('') + '</div>';
    }
    if (t.flex) {
        controls += '<div class="btn-group flex"><button type="button" aria-label="Flex"><svg class="ic"><use href="#i-flex"/></svg></button></div>';
    }
    controls += '<input type="range" aria-label="' + t.name + ' volume" min="0" max="100" value="' + t.pan + '">';

    return '<div class="row-grid track">' +
        '<div class="track-head' + (t.current ? ' current' : '') + '">' +
        '<div class="track-number">' + t.no + '</div>' +
        '<div class="track-icon">' + icon + '</div>' +
        '<div class="track-body' + (t.flex ? ' audio' : '') + '">' +
        '<div class="track-name">' + t.name + (t.channel ? ' <small>| ' + t.channel + '</small>' : '') + '</div>' +
        '<div class="track-controls">' + controls + '</div>' +
        (t.flex ? '<div class="select"><select aria-label="Flex mode"><option>' + t.flex + '</option></select><svg><use href="#i-updown"/></svg></div>' : '') +
        '</div></div>' +
        '<div class="lane"><div class="lane-grid">' + t.regions.map(regionHtml).join('') + '</div></div></div>';
}

document.getElementById('tracks').innerHTML = tracks.map(trackHtml).join('');

for (var i = 1; i <= 8; i++) {
    var bar = document.createElement('span');
    bar.textContent = i;
    document.getElementById('bars').appendChild(bar);
}

// Pan knobs
document.querySelectorAll('.pan').forEach(function (el) {
    el.innerHTML = '<svg viewBox="0 0 70 70"><path d="M18 61A31 31 0 1 1 52 61" fill="none" stroke="#1c2426" stroke-width="7"/>' +
        '<circle cx="35" cy="35" r="28" fill="#6a7e7d"/><path d="M35 7v9" stroke="#000" stroke-width="3"/><path d="M35 0v7" stroke="#5dfb3c" stroke-width="3"/></svg>';
});

// Fader scales and meters
var major = [3, 37, 71, 105, 141, 163, 191, 213, 237, 249, 271];
var minor = [13, 25, 117, 129, 145, 151, 157, 169, 175, 181, 187, 197, 203, 209, 219, 224, 229, 233, 243, 255, 261];
var scale = [[0, 3], [3, 21], [6, 39], [9, 57], [12, 75], [15, 93], [18, 111], [21, 129], [24, 147], [30, 171], [35, 191], [40, 211], [45, 231], [50, 251], [60, 271]];

document.querySelectorAll('.fader').forEach(function (el) {
    var out = el.classList.contains('fader-out');
    var svg = '<svg viewBox="0 0 138 276"><rect x="32" y="0" width="4" height="274" fill="#11181a"/>';
    major.forEach(function (y) {
        svg += '<path d="M8 ' + y + 'h22" stroke="' + (y === 71 ? '#fff' : '#8a9b99') + '" stroke-width="2"/>';
    });
    minor.forEach(function (y) {
        svg += '<path d="M22 ' + y + 'h8" stroke="#6f8280" stroke-width="2"/>';
    });
    scale.forEach(function (s) {
        svg += '<text x="81" y="' + (s[1] + 5) + '" text-anchor="end" fill="#b2c0be">' + s[0] + '</text>';
        svg += '<path d="M84 ' + s[1] + 'h6" stroke="#8a9b99" stroke-width="2"/>';
    });
    svg += '<path d="M89 3v270" stroke="#8a9b99" stroke-width="2" stroke-dasharray="2 4"/>';
    svg += '<rect x="91" y="1" width="18" height="272" fill="#1d2a24" stroke="#161e1d" stroke-width="2"/>';
    svg += '<rect x="92" y="2" width="16" height="72" fill="#24271f"/>';
    if (out) {
        svg += '<rect x="92" y="2" width="16" height="18" fill="#252228"/>';
    }
    svg += '</svg>';
    el.innerHTML = svg + '<input type="range" aria-label="' + el.dataset.name + '" min="0" max="1000" value="825">';
});
```
